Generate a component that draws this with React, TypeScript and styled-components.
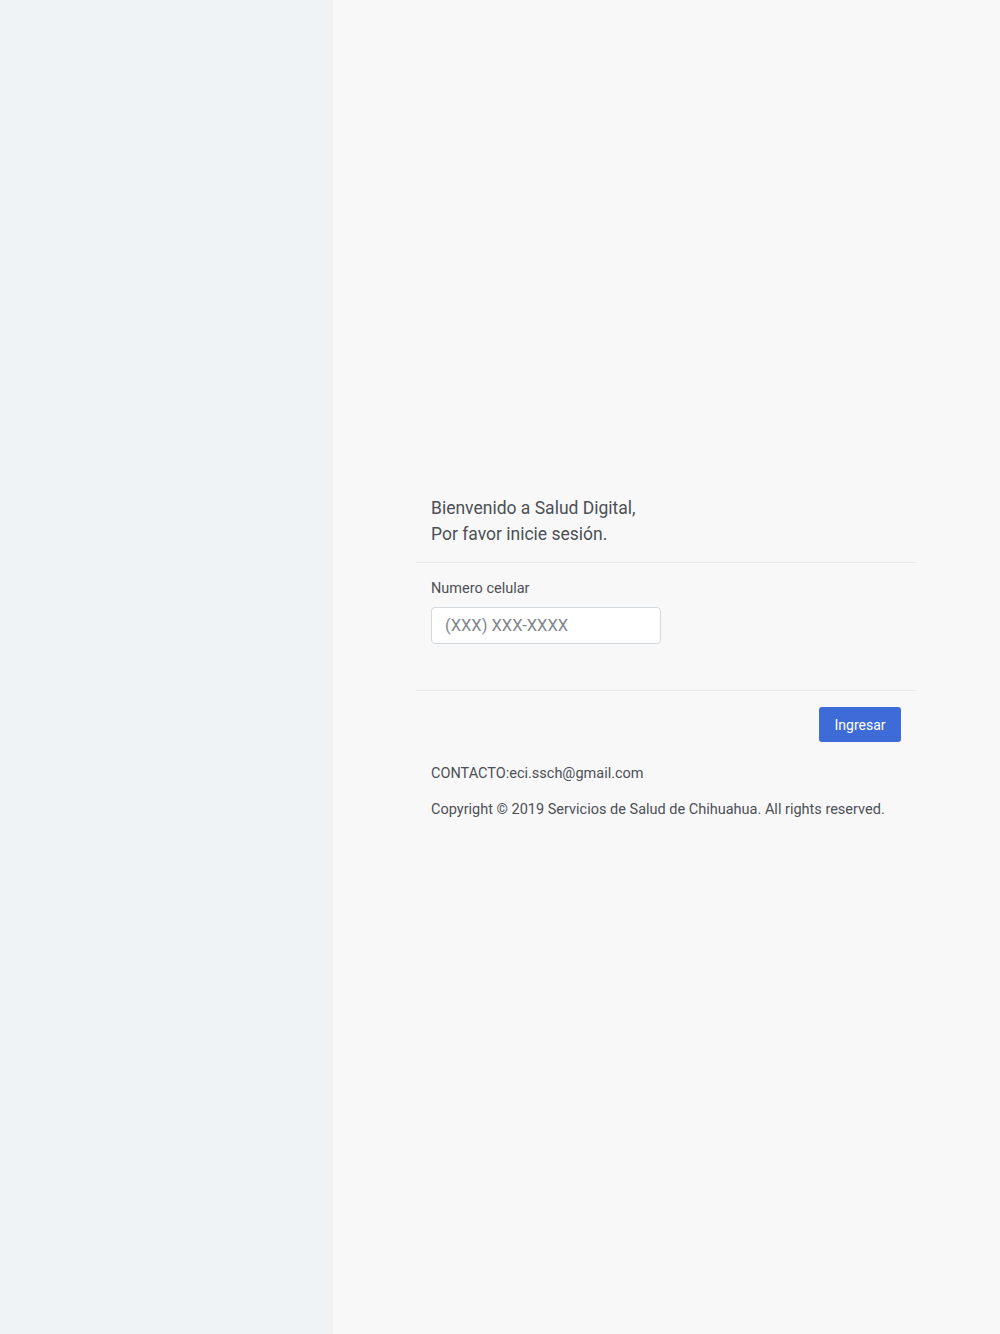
import React from "react";
import styled, { createGlobalStyle } from "styled-components";

const Global = createGlobalStyle`
  html, body { margin: 0; padding: 0; }
  body {
    font-family: Roboto, "Noto Sans", "Liberation Sans", sans-serif;
    color: #4b5056;
    background: #f9f8f9;
  }
  * { box-sizing: border-box; }
`;

const Page = styled.div`
  display: flex;
  min-height: 1334px;
`;

const SidePanel = styled.aside`
  width: 333px;
  flex-shrink: 0;
  background: #eff3f6;
`;

const Main = styled.main`
  flex: 1;
  background: #f9f8f9;
  display: flex;
  justify-content: flex-start;
  padding: 480px 0 0 83px;
`;

const Card = styled.div`
  width: 500px;
  display: flex;
  flex-direction: column;
`;

const Header = styled.div`
  padding: 15px 15px 15px;
  border-bottom: 1px solid #e8e8ea;
`;

const Title = styled.div`
  font-size: 17.5px;
  line-height: 26px;
  color: #4b5056;
`;

const Body = styled.div`
  padding: 15px 15px 46px;
  border-bottom: 1px solid #e8e8ea;
  display: flex;
  flex-direction: column;
  align-items: flex-start;
`;

const Label = styled.label`
  font-size: 14.5px;
  line-height: 22px;
  margin-bottom: 7px;
  color: #4b5056;
`;

const Input = styled.input`
  width: 230px;
  height: 37px;
  padding: 0 13px;
  border: 1px solid #d3d8dd;
  border-radius: 4px;
  background: #fff;
  font-family: inherit;
  font-size: 16.5px;
  color: #4b5056;
  outline: none;
  &::placeholder { color: #80868d; }
`;

const Footer = styled.div`
  padding: 16px 15px 15px;
  display: flex;
  justify-content: flex-end;
`;

const Button = styled.button`
  width: 82px;
  height: 35px;
  border: none;
  border-radius: 3px;
  background: #3d6bd8;
  color: #fff;
  font-family: inherit;
  font-size: 14px;
  cursor: pointer;
`;

const Info = styled.div`
  padding: 6px 15px 0;
  display: flex;
  flex-direction: column;
  gap: 15px;
`;

const InfoText = styled.p`
  margin: 0;
  font-size: 14.5px;
  line-height: 21px;
  color: #4b5056;
  white-space: nowrap;
`;

export default function App() {
  return (
    <>
      <Global />
      <Page>
        <SidePanel />
        <Main>
          <Card>
            <Header>
              <Title>Bienvenido a Salud Digital,</Title>
              <Title>Por favor inicie sesión.</Title>
            </Header>
            <Body>
              <Label htmlFor="cel">Numero celular</Label>
              <Input id="cel" placeholder="(XXX) XXX-XXXX" />
            </Body>
            <Footer>
              <Button>Ingresar</Button>
            </Footer>
            <Info>
              <InfoText>CONTACTO:eci.ssch@gmail.com</InfoText>
              <InfoText>Copyright © 2019 Servicios de Salud de Chihuahua. All rights reserved.</InfoText>
            </Info>
          </Card>
        </Main>
      </Page>
    </>
  );
}
